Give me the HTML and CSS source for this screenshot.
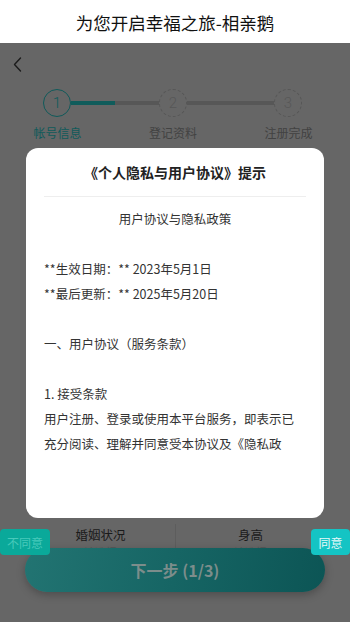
FILE: index.html
```html
<!DOCTYPE html>
<html lang="zh">
<head>
<meta charset="utf-8">
<title>相亲鹅</title>
<link rel="stylesheet" href="styles.css">
</head>
<body>
<div class="app">
  <header class="topbar">为您开启幸福之旅-相亲鹅</header>
  <main class="page">
    <div class="nav">
      <svg class="back" width="12" height="18" viewBox="0 0 12 18"><path d="M7.5 2 L1.5 8.5 L7.5 15" fill="none" stroke="#1c1c1c" stroke-width="1.4" stroke-linecap="round" stroke-linejoin="round"/></svg>
    </div>
    <div class="steps">
      <span class="circle active">1</span>
      <span class="line line-half"></span>
      <span class="circle">2</span>
      <span class="line line-b"></span>
      <span class="circle">3</span>
    </div>
    <div class="step-labels">
      <span class="label active">帐号信息</span>
      <span class="label">登记资料</span>
      <span class="label">注册完成</span>
    </div>
    <div class="form-row">
      <div class="field field-left">
        <div class="field-name">婚姻状况</div>
        <div class="field-value">请选择</div>
      </div>
      <div class="field field-right">
        <div class="field-name">身高</div>
        <div class="field-value">请选择</div>
      </div>
    </div>
    <button class="next">下一步 (1/3)</button>
  </main>

  <div class="modal">
    <h2 class="modal-title">《个人隐私与用户协议》提示</h2>
    <div class="modal-body">
      <p class="center">用户协议与隐私政策</p>
      <p class="blank"></p>
      <p>**生效日期：** 2023年5月1日</p>
      <p>**最后更新：** 2025年5月20日</p>
      <p class="blank"></p>
      <p>一、用户协议（服务条款）</p>
      <p class="blank"></p>
      <p>1. 接受条款</p>
      <p>用户注册、登录或使用本平台服务，即表示已<br>充分阅读、理解并同意受本协议及《隐私政</p>
    </div>
  </div>
  <button class="btn-disagree">不同意</button>
  <button class="btn-agree">同意</button>
</div>
</body>
</html>
```
FILE: styles.css
```css
* { box-sizing: border-box; }
html, body { margin: 0; padding: 0; }
body {
  font-family: "Noto Sans CJK SC", "Noto Sans", sans-serif;
  width: 350px;
  height: 622px;
  overflow: hidden;
}
.app {
  position: relative;
  width: 350px;
  height: 622px;
  display: flex;
  flex-direction: column;
}
.topbar {
  height: 43px;
  background: #fff;
  color: #111;
  font-size: 17.5px;
  display: flex;
  align-items: center;
  justify-content: center;
  padding-top: 1px;
}
.page {
  position: relative;
  flex: 1;
  background: #666666;
  display: flex;
  flex-direction: column;
}
.nav {
  height: 45px;
  padding: 13px 0 0 13px;
}
.back { display: block; }
.steps {
  display: flex;
  align-items: center;
  padding-left: 43px;
  height: 30px;
}
.circle {
  width: 28px;
  height: 28px;
  border-radius: 50%;
  border: 1.5px dashed #575757;
  color: #575757;
  font-family: "Roboto", sans-serif;
  font-weight: 300;
  font-size: 15px;
  display: flex;
  align-items: center;
  justify-content: center;
  flex: none;
}
.circle.active {
  border: 1.5px solid #0f5a5a;
  color: #0f5a5a;
}
.line {
  height: 4px;
  width: 88px;
  background: #575757;
  flex: none;
}
.line-half {
  background: linear-gradient(to right, #105c5b 0 50%, #575757 50% 100%);
}
.line-b { width: 87px; }
.step-labels {
  display: grid;
  grid-template-columns: 115px 116px 115px;
  margin-top: 7px;
}
.label {
  text-align: center;
  font-size: 12px;
  color: #424242;
  line-height: 16px;
}
.label.active { color: #0f5a5a; }
.form-row {
  margin-top: 383px;
  display: flex;
  height: 40px;
}
.field {
  flex: 1;
  text-align: center;
  padding-top: 2px;
}
.field-left { padding-left: 26px; }
.field-right {
  border-left: 1px solid #5d5d5d;
  padding-right: 25px;
}
.field-name {
  font-size: 12.5px;
  color: #1a1a1a;
  line-height: 18px;
}
.field-value {
  font-size: 11px;
  color: #555;
  line-height: 16px;
}
.next {
  position: absolute;
  left: 25px;
  right: 25px;
  bottom: 30px;
  height: 44px;
  border: none;
  border-radius: 22px;
  background: linear-gradient(100deg, #227472 0%, #166564 50%, #0c5555 100%);
  color: #7c8d8b;
  font-family: "Noto Sans CJK SC", sans-serif;
  font-size: 16px;
  font-weight: 700;
  box-shadow: 0 3px 8px rgba(0, 0, 0, 0.25);
  padding: 0;
}
.modal {
  position: absolute;
  left: 26px;
  top: 148px;
  width: 298px;
  height: 370px;
  background: #fff;
  border-radius: 12px;
  padding: 0 18px;
  overflow: hidden;
}
.modal-title {
  margin: 0;
  height: 49px;
  line-height: 48px;
  font-size: 14px;
  font-weight: 700;
  text-align: center;
  color: #222;
  border-bottom: 1px solid #eeeeee;
}
.modal-body {
  padding-top: 9px;
  height: 306px;
  overflow: hidden;
}
.modal-body p {
  margin: 0;
  font-size: 12.5px;
  line-height: 25px;
  color: #333;
}
.modal-body p.center { text-align: center; }
.modal-body p.blank { height: 25px; }
.btn-disagree, .btn-agree {
  position: absolute;
  top: 529px;
  height: 26px;
  border: none;
  border-radius: 4px;
  font-family: "Noto Sans CJK SC", sans-serif;
  font-size: 12px;
  padding: 0;
}
.btn-disagree {
  left: 0;
  width: 50px;
  background: #0aa99a;
  color: #48c9bb;
}
.btn-agree {
  right: 0;
  width: 39px;
  background: #14c4c4;
  color: #e6f9f9;
}
```
